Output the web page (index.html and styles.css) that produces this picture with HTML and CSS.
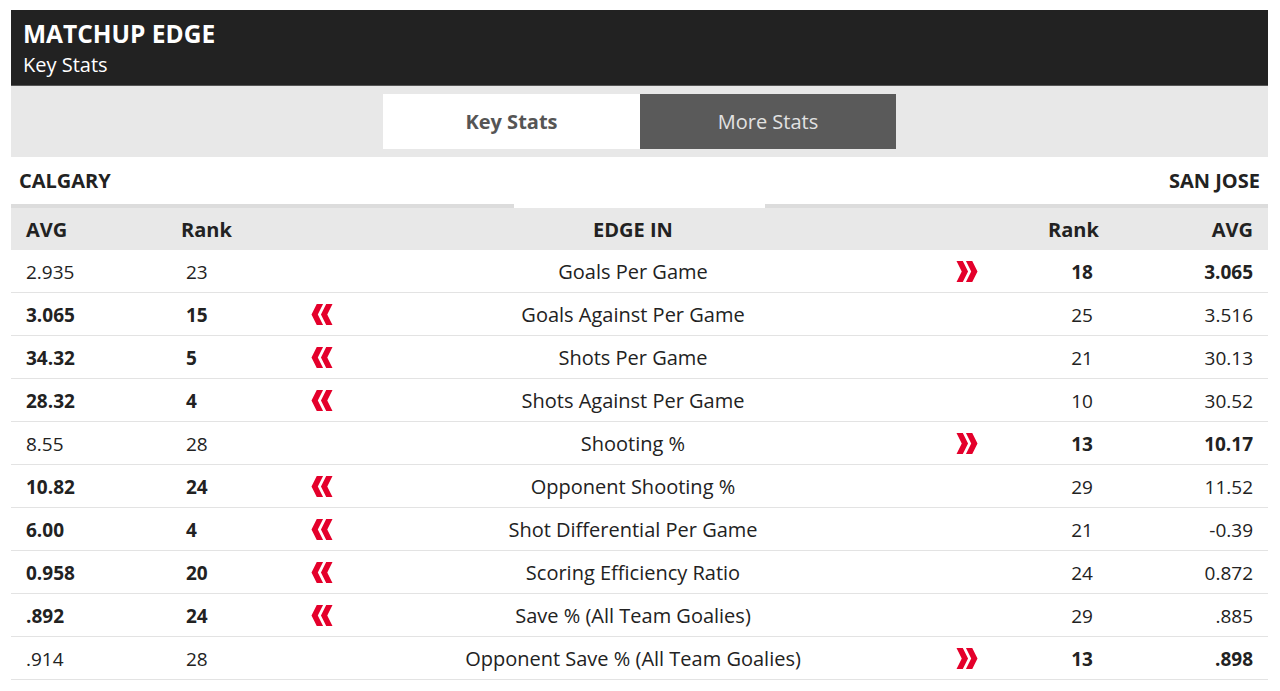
FILE: index.html
```html
<!DOCTYPE html>
<html>
<head>
<meta charset="utf-8">
<link rel="stylesheet" href="styles.css">
</head>
<body>
<div class="widget">
  <div class="top">
    <div class="title">MATCHUP EDGE</div>
    <div class="subtitle">Key Stats</div>
  </div>
  <div class="tabbar">
    <div class="tabs">
      <div class="tab active">Key Stats</div>
      <div class="tab">More Stats</div>
    </div>
  </div>
  <div class="teams">
    <div class="team">CALGARY</div>
    <div class="team">SAN JOSE</div>
  </div>
  <div class="table">
    <div class="row head">
      <div class="c avg">AVG</div>
      <div class="c rank">Rank</div>
      <div class="c arr"></div>
      <div class="c stat">EDGE IN</div>
      <div class="c arr"></div>
      <div class="c rrank">Rank</div>
      <div class="c ravg">AVG</div>
    </div>

    <div class="row">
      <div class="c avg">2.935</div>
      <div class="c rank">23</div>
      <div class="c arr"></div>
      <div class="c stat">Goals Per Game</div>
      <div class="c arr right"><svg viewBox="0 0 20 20" width="22" height="21"><polygon points="0,0 6,0 11,10 6,20 0,20 5,10"/><polygon points="9,0 15,0 20,10 15,20 9,20 14,10"/></svg></div>
      <div class="c rrank b">18</div>
      <div class="c ravg b">3.065</div>
    </div>
    <div class="row">
      <div class="c avg b">3.065</div>
      <div class="c rank b">15</div>
      <div class="c arr"><svg viewBox="0 0 20 20" width="22" height="21"><polygon points="20,0 14,0 9,10 14,20 20,20 15,10"/><polygon points="11,0 5,0 0,10 5,20 11,20 6,10"/></svg></div>
      <div class="c stat">Goals Against Per Game</div>
      <div class="c arr"></div>
      <div class="c rrank">25</div>
      <div class="c ravg">3.516</div>
    </div>
    <div class="row">
      <div class="c avg b">34.32</div>
      <div class="c rank b">5</div>
      <div class="c arr"><svg viewBox="0 0 20 20" width="22" height="21"><polygon points="20,0 14,0 9,10 14,20 20,20 15,10"/><polygon points="11,0 5,0 0,10 5,20 11,20 6,10"/></svg></div>
      <div class="c stat">Shots Per Game</div>
      <div class="c arr"></div>
      <div class="c rrank">21</div>
      <div class="c ravg">30.13</div>
    </div>
    <div class="row">
      <div class="c avg b">28.32</div>
      <div class="c rank b">4</div>
      <div class="c arr"><svg viewBox="0 0 20 20" width="22" height="21"><polygon points="20,0 14,0 9,10 14,20 20,20 15,10"/><polygon points="11,0 5,0 0,10 5,20 11,20 6,10"/></svg></div>
      <div class="c stat">Shots Against Per Game</div>
      <div class="c arr"></div>
      <div class="c rrank">10</div>
      <div class="c ravg">30.52</div>
    </div>
    <div class="row">
      <div class="c avg">8.55</div>
      <div class="c rank">28</div>
      <div class="c arr"></div>
      <div class="c stat">Shooting %</div>
      <div class="c arr right"><svg viewBox="0 0 20 20" width="22" height="21"><polygon points="0,0 6,0 11,10 6,20 0,20 5,10"/><polygon points="9,0 15,0 20,10 15,20 9,20 14,10"/></svg></div>
      <div class="c rrank b">13</div>
      <div class="c ravg b">10.17</div>
    </div>
    <div class="row">
      <div class="c avg b">10.82</div>
      <div class="c rank b">24</div>
      <div class="c arr"><svg viewBox="0 0 20 20" width="22" height="21"><polygon points="20,0 14,0 9,10 14,20 20,20 15,10"/><polygon points="11,0 5,0 0,10 5,20 11,20 6,10"/></svg></div>
      <div class="c stat">Opponent Shooting %</div>
      <div class="c arr"></div>
      <div class="c rrank">29</div>
      <div class="c ravg">11.52</div>
    </div>
    <div class="row">
      <div class="c avg b">6.00</div>
      <div class="c rank b">4</div>
      <div class="c arr"><svg viewBox="0 0 20 20" width="22" height="21"><polygon points="20,0 14,0 9,10 14,20 20,20 15,10"/><polygon points="11,0 5,0 0,10 5,20 11,20 6,10"/></svg></div>
      <div class="c stat">Shot Differential Per Game</div>
      <div class="c arr"></div>
      <div class="c rrank">21</div>
      <div class="c ravg">-0.39</div>
    </div>
    <div class="row">
      <div class="c avg b">0.958</div>
      <div class="c rank b">20</div>
      <div class="c arr"><svg viewBox="0 0 20 20" width="22" height="21"><polygon points="20,0 14,0 9,10 14,20 20,20 15,10"/><polygon points="11,0 5,0 0,10 5,20 11,20 6,10"/></svg></div>
      <div class="c stat">Scoring Efficiency Ratio</div>
      <div class="c arr"></div>
      <div class="c rrank">24</div>
      <div class="c ravg">0.872</div>
    </div>
    <div class="row">
      <div class="c avg b">.892</div>
      <div class="c rank b">24</div>
      <div class="c arr"><svg viewBox="0 0 20 20" width="22" height="21"><polygon points="20,0 14,0 9,10 14,20 20,20 15,10"/><polygon points="11,0 5,0 0,10 5,20 11,20 6,10"/></svg></div>
      <div class="c stat">Save % (All Team Goalies)</div>
      <div class="c arr"></div>
      <div class="c rrank">29</div>
      <div class="c ravg">.885</div>
    </div>
    <div class="row">
      <div class="c avg">.914</div>
      <div class="c rank">28</div>
      <div class="c arr"></div>
      <div class="c stat">Opponent Save % (All Team Goalies)</div>
      <div class="c arr right"><svg viewBox="0 0 20 20" width="22" height="21"><polygon points="0,0 6,0 11,10 6,20 0,20 5,10"/><polygon points="9,0 15,0 20,10 15,20 9,20 14,10"/></svg></div>
      <div class="c rrank b">13</div>
      <div class="c ravg b">.898</div>
    </div>
  </div>
</div>
</body>
</html>
```

FILE: styles.css
```css
* { box-sizing: border-box; }
html, body { margin: 0; padding: 0; background: #fff; }
body {
  font-family: "Open Sans", "Liberation Sans", sans-serif;
  color: #222;
}
.widget {
  margin: 10px 12px 0 11px;
}
.top {
  background: #222;
  color: #fff;
  padding: 8px 12px 6px;
  height: 76px;
  border-bottom: 1px solid #555;
}
.title {
  font-size: 24.5px;
  font-weight: 700;
  line-height: 32px;
}
.subtitle {
  font-size: 20px;
  line-height: 30px;
}
.tabbar {
  background: #e8e8e8;
  height: 71px;
  display: flex;
  justify-content: center;
  padding-top: 8px;
}
.tabs {
  display: flex;
  height: 55px;
}
.tab {
  width: 256px;
  display: flex;
  align-items: center;
  justify-content: center;
  font-size: 20px;
  background: #5a5a5a;
  color: #e2e2e2;
}
.tab.active {
  background: #fff;
  color: #555;
  font-weight: 700;
  width: 257px;
}
.teams {
  display: flex;
  justify-content: space-between;
  height: 47px;
  padding: 10px 8px 0 8px;
  font-size: 20px;
  font-weight: 700;
}
.row {
  display: grid;
  grid-template-columns: 160px 119px 70px 546px 94px 120px 148px;
  height: 43px;
  align-items: center;
  border-bottom: 1px solid #e3e3e3;
  font-size: 19px;
  position: relative;
  padding-top: 1px;
}
.row.head {
  background: #e8e8e8;
  border-top: 4px solid #dcdcdc;
  height: 46px;
  font-weight: 700;
  font-size: 20px;
  border-bottom: none;
  padding-top: 0;
}
.row.head::before {
  content: "";
  position: absolute;
  top: -4px;
  left: 503px;
  width: 251px;
  height: 4px;
  background: #fff;
}
.c { white-space: nowrap; }
.avg { padding-left: 15px; }
.rank { padding-left: 15px; }
.head .rank { padding-left: 10px; }
.arr { display: flex; align-items: center; padding-left: 21px; }
.arr.right { padding-left: 50px; }
.arr svg { fill: #e4002b; display: block; }
.stat { text-align: center; font-size: 20px; }
.rrank { text-align: center; padding-left: 44px; }
.head .rrank { text-align: left; padding-left: 48px; }
.ravg { text-align: right; padding-right: 15px; }
.b { font-weight: 700; }
```
